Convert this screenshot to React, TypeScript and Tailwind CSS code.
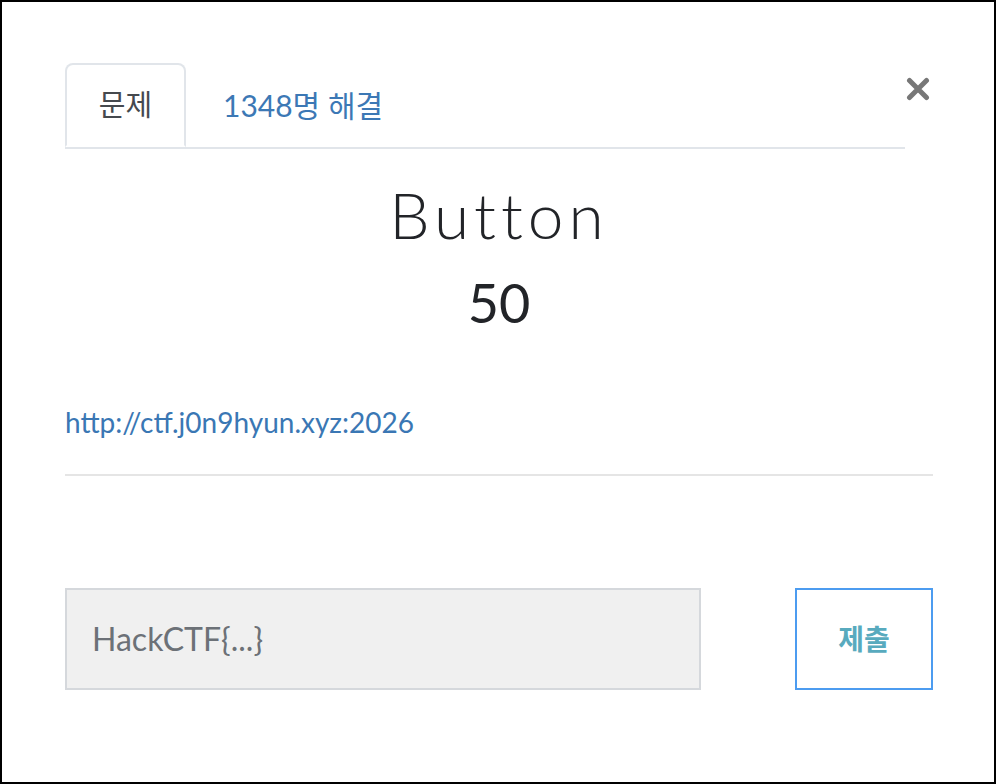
export default function App() {
  const font = { fontFamily: '"Lato", "Noto Sans CJK KR", sans-serif' };
  return (
    <div
      className="w-[996px] h-[784px] border-2 border-black bg-white pl-[63px] pr-[61px] pt-[61px] font-['Lato','Noto_Sans_CJK_KR',sans-serif]"
      style={font}
    >
      {/* tabs + close */}
      <div className="flex items-start">
        <ul className="flex flex-1 border-b-2 border-[#e1e5ea]">
          <li className="-mb-[2px] w-[121px] h-[84px] flex items-center justify-center rounded-t-[8px] border-2 border-b-transparent border-[#e1e5ea] bg-white text-[29px] text-[#45494e]">
            문제
          </li>
          <li className="h-[84px] flex items-center pl-[37px] text-[30px] text-[#3c78b5]">
            1348명 해결
          </li>
        </ul>
        <button className="ml-[1px] mr-[3px] mt-[14px] w-[24px] h-[24px] flex items-center justify-center">
          <svg width="24" height="24" viewBox="0 0 24 24">
            <path
              d="M3.5 3.5 L20.5 20.5 M20.5 3.5 L3.5 20.5"
              stroke="#777777"
              strokeWidth="5"
              strokeLinecap="round"
            />
          </svg>
        </button>
      </div>

      {/* title */}
      <h1 className="mt-[34px] text-center text-[64px] leading-none font-light tracking-[5px] text-[#222428]">
        Button
      </h1>
      <p className="mt-[29px] text-center text-[54px] leading-none text-[#222428]">50</p>

      <a className="block mt-[78px] text-[28px] leading-none text-[#3a77b4]" href="#">
        http://ctf.j0n9hyun.xyz:2026
      </a>

      <hr className="mt-[38px] border-0 h-[2px] bg-[#e5e5e5]" />

      {/* flag form */}
      <div className="mt-[112px] flex items-start justify-between">
        <div className="w-[636px] h-[102px] border-2 border-[#d5d8dc] bg-[#f0f0f0] flex items-center pl-[25px] text-[32px] text-[#6c7177]">
          HackCTF{"{...}"}
        </div>
        <button className="w-[138px] h-[102px] border-2 border-[#4c9cf0] bg-white flex items-center justify-center text-[28px] font-bold text-[#58aabe]">
          제출
        </button>
      </div>
    </div>
  );
}
